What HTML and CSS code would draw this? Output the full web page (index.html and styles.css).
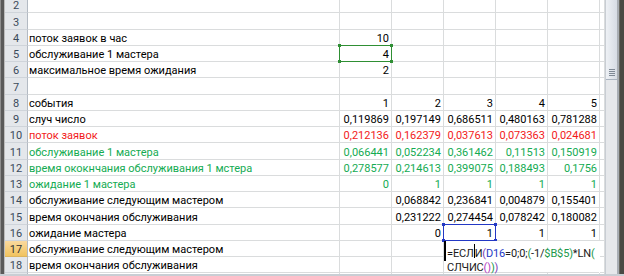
FILE: index.html
```html
<!DOCTYPE html>
<html lang="ru">
<head>
<meta charset="utf-8">
<title>Лист Excel</title>
<link rel="stylesheet" href="styles.css">
</head>
<body>
<div class="window">
  <div class="main">
    <div class="frame-l"></div>
    <div class="viewport">
      <div class="sheet">
        <div class="row"><div class="rh">2</div><div class="c"></div><div class="c"></div><div class="c"></div><div class="c"></div><div class="c"></div><div class="c"></div><div class="c"></div></div>
        <div class="row"><div class="rh">3</div><div class="c"></div><div class="c"></div><div class="c"></div><div class="c"></div><div class="c"></div><div class="c"></div><div class="c"></div></div>
        <div class="row"><div class="rh">4</div><div class="c">поток заявок в час</div><div class="c n">10</div><div class="c"></div><div class="c"></div><div class="c"></div><div class="c"></div><div class="c"></div></div>
        <div class="row"><div class="rh">5</div><div class="c">обслуживание 1 мастера</div><div class="c n hl green">4<span class="h tl"></span><span class="h tr"></span><span class="h bl"></span><span class="h br"></span></div><div class="c"></div><div class="c"></div><div class="c"></div><div class="c"></div><div class="c"></div></div>
        <div class="row"><div class="rh">6</div><div class="c">максимальное время ожидания</div><div class="c n">2</div><div class="c"></div><div class="c"></div><div class="c"></div><div class="c"></div><div class="c"></div></div>
        <div class="row"><div class="rh">7</div><div class="c"></div><div class="c"></div><div class="c"></div><div class="c"></div><div class="c"></div><div class="c"></div><div class="c"></div></div>
        <div class="row"><div class="rh">8</div><div class="c">события</div><div class="c n">1</div><div class="c n">2</div><div class="c n">3</div><div class="c n">4</div><div class="c n">5</div><div class="c"></div></div>
        <div class="row"><div class="rh">9</div><div class="c">случ число</div><div class="c n">0,119869</div><div class="c n">0,197149</div><div class="c n">0,686511</div><div class="c n">0,480163</div><div class="c n">0,781288</div><div class="c"></div></div>
        <div class="row red"><div class="rh">10</div><div class="c">поток заявок</div><div class="c n">0,212136</div><div class="c n">0,162379</div><div class="c n">0,037613</div><div class="c n">0,073363</div><div class="c n">0,024681</div><div class="c"></div></div>
        <div class="row grn"><div class="rh">11</div><div class="c">обслуживание 1 мастера</div><div class="c n">0,066441</div><div class="c n">0,052234</div><div class="c n">0,361462</div><div class="c n">0,11513</div><div class="c n">0,150919</div><div class="c"></div></div>
        <div class="row grn"><div class="rh">12</div><div class="c">время ококнчания обслуживания 1 мстера</div><div class="c n">0,278577</div><div class="c n">0,214613</div><div class="c n">0,399075</div><div class="c n">0,188493</div><div class="c n">0,1756</div><div class="c"></div></div>
        <div class="row grn"><div class="rh">13</div><div class="c">ожидание 1 мастера</div><div class="c n">0</div><div class="c n">1</div><div class="c n">1</div><div class="c n">1</div><div class="c n">1</div><div class="c"></div></div>
        <div class="row"><div class="rh">14</div><div class="c">обслуживание следующим мастером</div><div class="c"></div><div class="c n">0,068842</div><div class="c n">0,236841</div><div class="c n">0,004879</div><div class="c n">0,155401</div><div class="c"></div></div>
        <div class="row"><div class="rh">15</div><div class="c">время окончания обслуживания</div><div class="c"></div><div class="c n">0,231222</div><div class="c n">0,274454</div><div class="c n">0,078242</div><div class="c n">0,180082</div><div class="c"></div></div>
        <div class="row"><div class="rh">16</div><div class="c">ожидание мастера</div><div class="c"></div><div class="c n">0</div><div class="c n hl blue">1<span class="h tl"></span><span class="h tr"></span><span class="h bl"></span><span class="h br"></span></div><div class="c n">1</div><div class="c n">1</div><div class="c"></div></div>
        <div class="row"><div class="rh sel">17</div><div class="c">обслуживание следующим мастером</div><div class="c"></div><div class="c"></div><div class="c"></div></div>
        <div class="row"><div class="rh">18</div><div class="c">время окончания обслуживания</div><div class="c"></div><div class="c"></div><div class="c"></div></div>
        <div class="row"><div class="rh"></div><div class="c"></div><div class="c"></div><div class="c"></div><div class="c"></div><div class="c"></div><div class="c"></div><div class="c"></div></div>
        <div class="editor">
          <div class="ed-line first">=ЕСЛ<span class="caret"></span>И<span class="p1">(</span><span class="ref-b">D16</span>=0;0;<span class="p2">(</span>-1/<span class="p2">$B$5</span><span class="p2">)</span>*LN<span class="p2">(</span></div>
          <div class="ed-line">СЛЧИС<span class="p3">()</span><span class="p2">)</span><span class="p1">)</span></div>
        </div>
      </div>
    </div>
    <div class="vscroll">
      <div class="thumb"><div class="grip"></div></div>
    </div>
    <div class="frame-r"></div>
  </div>
  <div class="bottom"></div>
</div>
</body>
</html>
```
FILE: styles.css
```css
* { box-sizing: border-box; }
html, body { margin: 0; padding: 0; }
body {
  width: 624px;
  height: 276px;
  overflow: hidden;
  background: #fff;
  font-family: Roboto, "Liberation Sans", sans-serif;
  font-size: 11px;
  color: #000;
}
.window { display: flex; flex-direction: column; height: 276px; }
.main { display: flex; flex: 1; min-height: 0; }
.frame-l {
  width: 5px;
  flex: none;
  background: linear-gradient(to right, #8e8e8e 0 1px, #5a5a5a 1px 4px, #bcbcbc 4px 5px);
}
.viewport { width: 600px; flex: none; overflow: hidden; }
.sheet {
  display: grid;
  grid-template-columns: 23px 312px repeat(5, 52px) 5px;
  grid-auto-rows: 16.25px;
  margin-top: -3px;
}
.row { display: contents; }
.rh {
  background: #e4e7eb;
  border-right: 1px solid #b3bac3;
  border-bottom: 1px solid #cfd4da;
  color: #3b4a5a;
  display: flex;
  align-items: flex-end;
  justify-content: center;
  line-height: 13px;
}
.rh.sel {
  background: linear-gradient(#f9d99f, #f1c35f);
  border-bottom-color: #dcb45e;
  color: #333;
}
.c {
  position: relative;
  border-right: 1px solid #dadcdd;
  border-bottom: 1px solid #dadcdd;
  display: flex;
  align-items: flex-end;
  line-height: 13px;
  white-space: nowrap;
  padding: 0 2px 0 1px;
}
.n { justify-content: flex-end; }
.red .c { color: #f21a1a; }
.grn .c { color: #14ab52; }
.hl { z-index: 1; }
.hl::after {
  content: "";
  position: absolute;
  left: -1px; top: -1px; right: -1px; bottom: -1px;
  border: 1px solid currentColor;
}
.hl.green { color: #000; }
.hl.green::after { border-color: #2f8f34; }
.hl.blue::after { border-color: #2338c4; }
.h {
  position: absolute;
  width: 3px;
  height: 3px;
  z-index: 2;
}
.green .h { background: #2f8f34; }
.blue .h { background: #2338c4; }
.h.tl { left: -2px; top: -2px; }
.h.tr { right: -2px; top: -2px; }
.h.bl { left: -2px; bottom: -2px; }
.h.br { right: -2px; bottom: -2px; }

.editor {
  grid-column: 5 / 8;
  grid-row: 16 / 18;
  background: #fff;
  margin-right: 1px;
  border-bottom: 1px solid #dadcdd;
  display: flex;
  flex-direction: column;
  z-index: 3;
  white-space: nowrap;
  color: #1a1a1a;
  letter-spacing: -0.15px;
}
.ed-line { line-height: 14.5px; padding-left: 3px; }
.ed-line.first {
  padding-top: 3px;
  padding-left: 1px;
  border-left: 2px solid #000;
}
.caret {
  display: inline-block;
  width: 1px;
  height: 14px;
  background: #000;
  vertical-align: -1px;
}
.p1 { color: #7b3cb4; }
.p2 { color: #21994a; }
.p3 { color: #b23cc0; }
.ref-b { color: #2338c4; }

.vscroll {
  width: 12px;
  flex: none;
  background: #e6e8eb;
  border-left: 1px solid #c8cdd3;
  display: flex;
  flex-direction: column;
}
.thumb {
  height: 80px;
  background: linear-gradient(to right, #eef1f5, #d6dce4);
  border-bottom: 1px solid #a9b3bf;
  display: flex;
  align-items: flex-end;
  justify-content: center;
  padding-bottom: 3px;
}
.grip {
  width: 6px;
  height: 7px;
  background: repeating-linear-gradient(#7f8995 0 1px, transparent 1px 2px);
}
.frame-r {
  width: 7px;
  flex: none;
  background: linear-gradient(to right, #a9aeb4 0 2px, #6a6a62 2px 3px, #4a4a44 3px 7px);
}
.bottom { height: 2px; background: #c9ced4; }
```
